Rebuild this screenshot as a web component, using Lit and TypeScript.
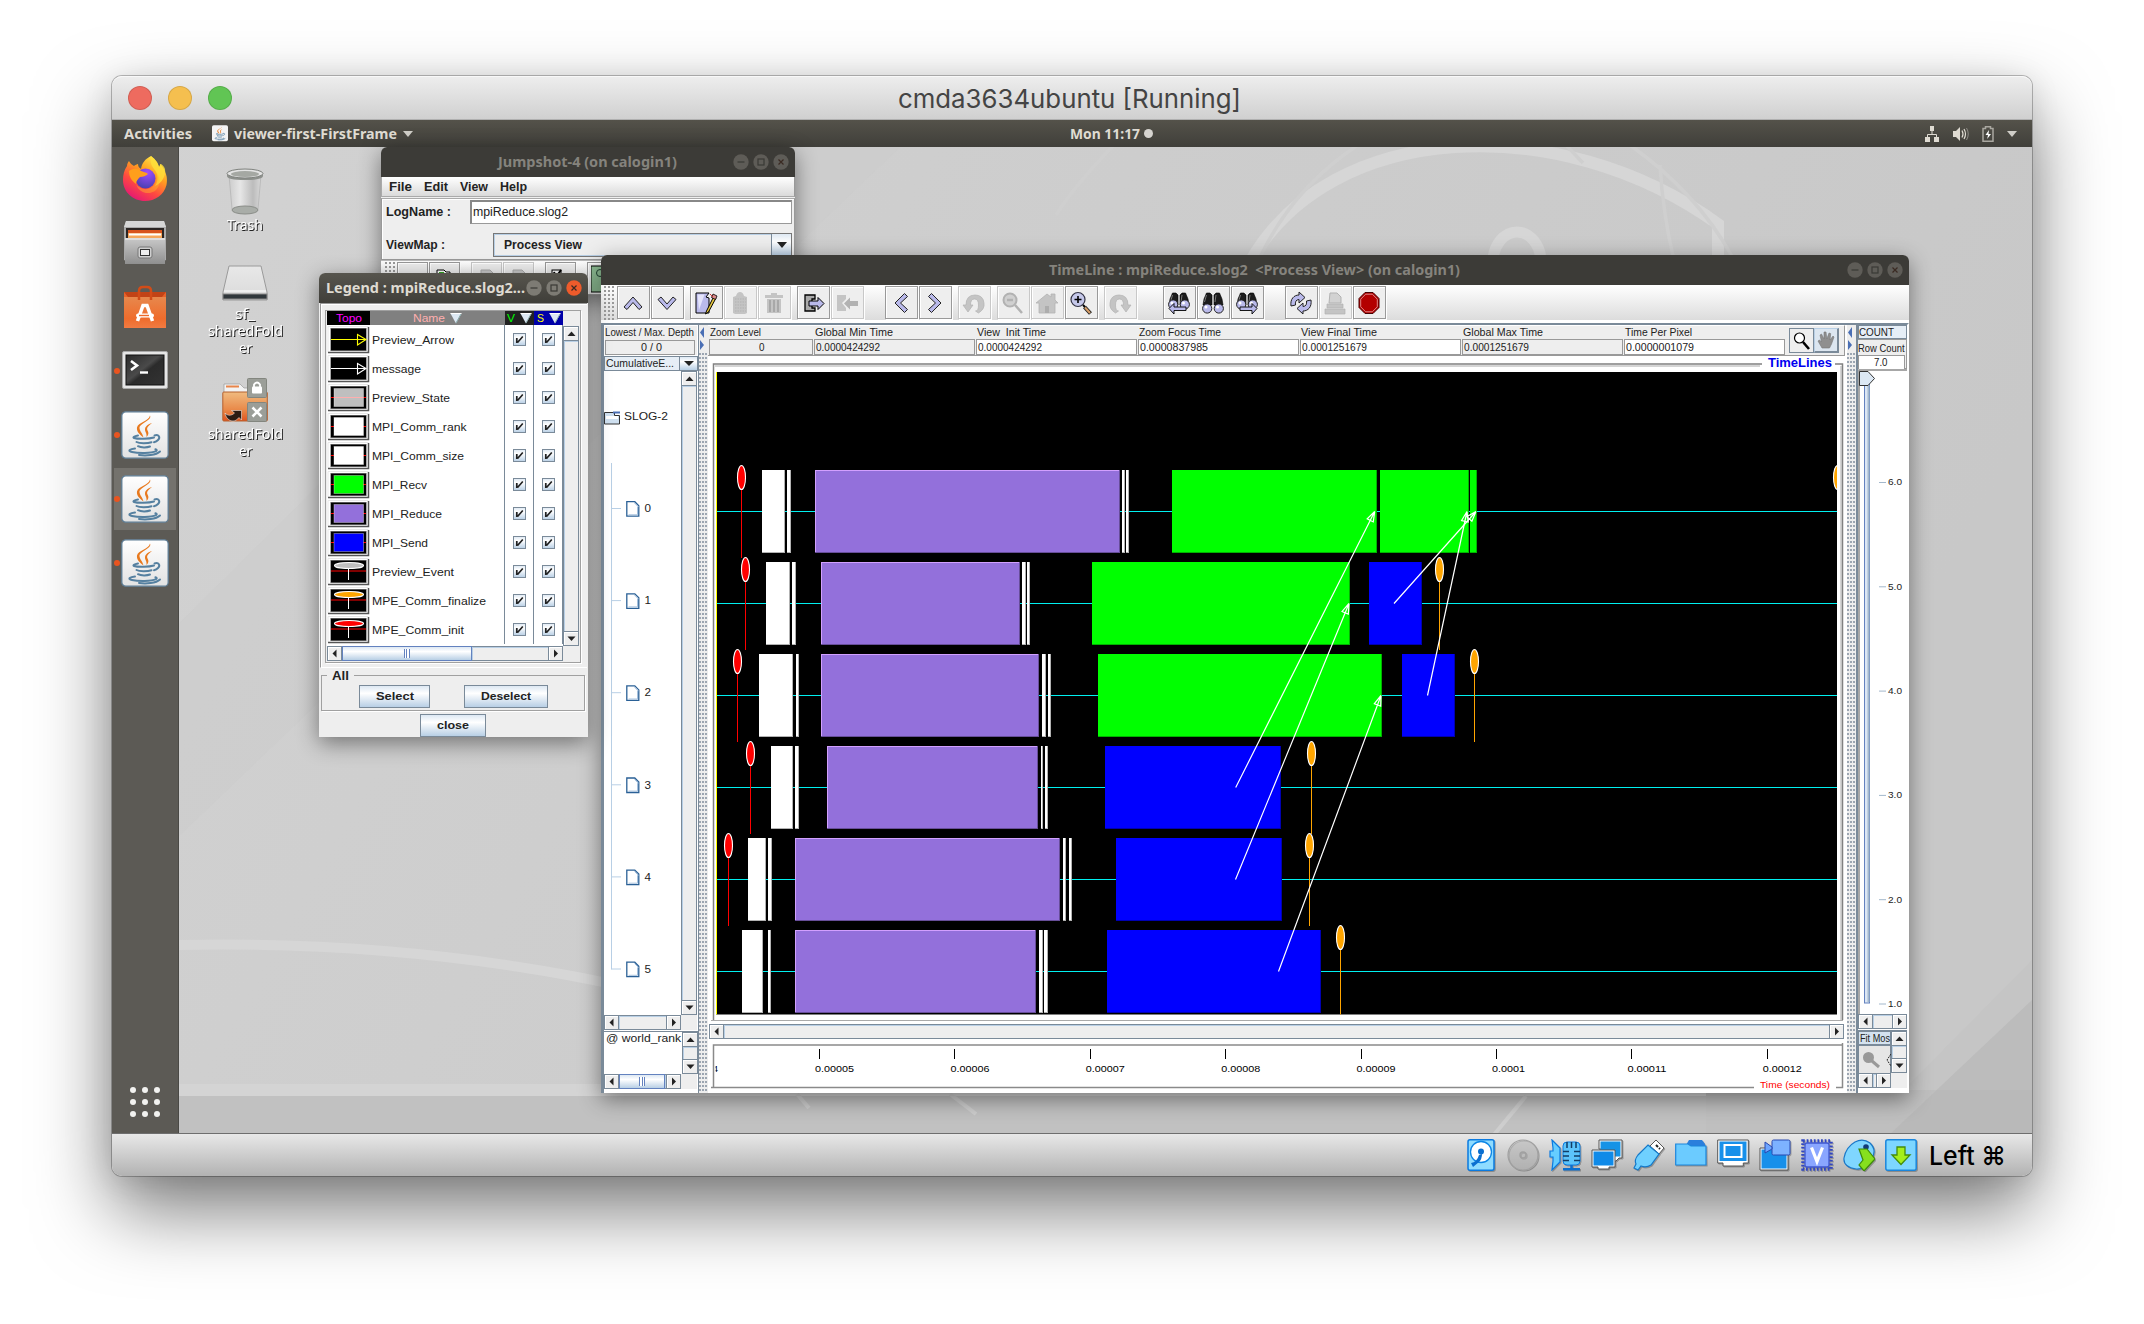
import { LitElement, html, svg, css, unsafeCSS } from "lit";
import { customElement } from "lit/decorators.js";

type Opt = { weight?: number; fill?: string; family?: string; shadow?: boolean };

const UBUNTU = "'Noto Sans','Open Sans','DejaVu Sans',sans-serif";
const HELV = "'Liberation Sans',Arial,sans-serif";
const MAC = "Inter,'Liberation Sans','DejaVu Sans',sans-serif";

/* A text run fitted to an exact advance width, centred on its cap height. */
const tx = (s: string, w: number, size: number, o: Opt = {}) => {
  const h = Math.ceil(size);
  return html`<svg class=${o.shadow ? "tx sh" : "tx"} width=${w} height=${h}>
    <text xml:space="preserve" x="0" y=${h / 2 + size * 0.36} textLength=${w} lengthAdjust="spacingAndGlyphs"
      font-family=${o.family ?? HELV} font-size=${size} font-weight=${o.weight ?? 400} fill=${o.fill ?? "#222"}>${s}</text></svg>`;
};

/* The same run, placed inside a drawing. */
const st = (s: string, x: number, cy: number, w: number, size: number, fill = "#222", weight = 400) =>
  svg`<text x=${x} y=${cy + size * 0.36} textLength=${w} lengthAdjust="spacingAndGlyphs" font-family=${HELV}
    font-size=${size} font-weight=${weight} fill=${fill}>${s}</text>`;

const tri: Record<string, string> = {
  u: "M2.5 9h8L6.5 4.5z",
  d: "M2.5 4.5h8L6.5 9z",
  l: "M8.5 2.5v8L4.5 6.5z",
  r: "M5 2.5v8L9 6.5z",
};
const sb = (d: string) => html`<div class="sb"><svg width="13" height="13" viewBox="0 0 13 13"><path d=${tri[d]} fill="#222" /></svg></div>`;

const winBtns = (active = false) => html`<div class="wb">
  <svg width="16" height="16" viewBox="0 0 16 16"><circle cx="8" cy="8" r="7.7" fill=${active ? "#7d7b74" : "#5e5c57"} /><path d="M4.5 8h7" stroke="#3a3935" stroke-width="1.2" /></svg>
  <svg width="16" height="16" viewBox="0 0 16 16"><circle cx="8" cy="8" r="7.7" fill=${active ? "#7d7b74" : "#5e5c57"} /><rect x="5" y="5" width="6" height="6" fill="none" stroke="#3a3935" stroke-width="1.2" /></svg>
  <svg width="16" height="16" viewBox="0 0 16 16"><circle cx="8" cy="8" r="7.7" fill=${active ? "#ee5b2b" : "#5e5c57"} /><path d="M5.5 5.5l5 5M10.500 5.500l-5 5" stroke="#3a2a22" stroke-width="1.2" /></svg>
</div>`;

const javaArt = svg`
  <path d="M29 4.500c2.500 5-10.500 7.500-10.500 12.500 0 3 3 5 4 9.500-4.500-3.500-7-6-6.500-10 .8-5 12-6.500 13-12z" fill="#e8791e"/>
  <path d="M31 12c-4 1-7 3.500-7 6.500 0 2.500 2 3.500 1.500 7.500 3-3 1.800-5 .8-7-.8-2.500 1.500-4.500 4.700-7z" fill="#e8791e"/>
  <g fill="none" stroke="#5580a0" stroke-width="2" stroke-linecap="round">
  <path d="M17 24.500c-4 .8-5.500 1.800-4 2.500 4 1.300 15 1 20-.5"/><path d="M33.500 24.500c4.500-1.500 6 2 3.500 4.500-1 1-2.500 1.800-4 2.200"/>
  <path d="M15.500 31c3 1.800 11.500 1.500 15 .2"/><path d="M17 35.200c3 1.600 9 1.500 12 .3"/>
  <path d="M14 37.500c-5 .5-8 2.500-3 3.500 7 1.600 19 1.400 24-.8 1.500-1 .5-1.700-.6-2"/><path d="M18 44c7 .9 17 .3 21-3.500"/></g>`;
const java = html`<svg width="48" height="48" viewBox="0 0 48 48"><defs><linearGradient id="jg" x2="0" y2="1"><stop offset="0" stop-color="#fff"/><stop offset="1" stop-color="#e2e2e2"/></linearGradient></defs>
  <rect x=".8" y=".8" width="46.400" height="46.400" rx="4" fill="url(#jg)" stroke="#5d7c94" stroke-width="1.300"/>${javaArt}</svg>`;

const firefox = html`<svg width="48" height="50" viewBox="0 0 48 50"><defs>
  <linearGradient id="fx" x1=".8" y1="0" x2=".2" y2="1"><stop offset="0" stop-color="#fff44f"/><stop offset=".35" stop-color="#ffa020"/><stop offset=".65" stop-color="#ff4a40"/><stop offset="1" stop-color="#e0107c"/></linearGradient>
  <radialGradient id="fp" cx=".6" cy=".2" r=".9"><stop offset="0" stop-color="#a04cff"/><stop offset="1" stop-color="#3f3fa8"/></radialGradient></defs>
  <path d="M30 2c5 4 7 7 8 11 1-1 1-2 1-3 6 6 8 14 6.500 21C43 41 34 47 24 47 12 47 2 38 2 26c0-5 1-10 4-14 0-2 1-4 2-5 1 2 3 4 5 5 1-1 3-2 4-2 0 2 1 4 3 5 1-6 4-10 10-13z" fill="url(#fx)"/>
  <circle cx="24.500" cy="24.500" r="10" fill="url(#fp)"/>
  <path d="M8 17c4-3 9-3 12 0 2 1 5 1 7 3-2 2-5 3-8 3-2 2-4 4-4 7-4-3-7-7-7-13z" fill="#ff9f1c"/>
  <path d="M30 2c-1 6 0 9 3 13 4 4 5 12 1 17 7-3 11-10 10-17-1-3-3-5-5-5 0 1 0 2-1 3-1-4-3-7-8-11z" fill="#ffe03a" opacity=".8"/>
  <path d="M15 30c3 5 11 7 16 3 5-4 6-10 3-16 6 6 6 14 1 19-7 6-17 3-20-6z" fill="#ffb52a" opacity=".45"/></svg>`;
const files = html`<svg width="44" height="46" viewBox="0 0 44 46"><defs><linearGradient id="fg" x2="0" y2="1"><stop offset="0" stop-color="#c9c9c9"/><stop offset="1" stop-color="#8f8f8f"/></linearGradient></defs>
  <path d="M3 1h38l2 6v33l-2 1V10H3v31l-2-1V7z" fill="#aaa"/><path d="M3 1h38l2 6H1z" fill="#d6d6d6"/><rect x="3" y="8" width="38" height="12" fill="#2b2523"/>
  <path d="M5 10h34v9H5z" fill="#d8531c"/><path d="M5 13h34v6H5z" fill="#f5a85c"/><path d="M6 13.500h32v2H6z" fill="#fff"/>
  <path d="M2 18h40v26H2z" fill="url(#fg)"/><path d="M2 18h40v2H2z" fill="#ddd"/><rect x="15" y="27" width="14" height="11" rx="2" fill="#cfcfcf" stroke="#777"/><rect x="17.500" y="29.500" width="9" height="6" fill="#eee" stroke="#333"/></svg>`;
const software = html`<svg width="44" height="44" viewBox="0 0 44 44"><defs><linearGradient id="sg" x2="0" y2="1"><stop offset="0" stop-color="#e7884d"/><stop offset=".7" stop-color="#ef6c2c"/><stop offset="1" stop-color="#f27b42"/></linearGradient></defs>
  <path d="M1 7h42v5H1z" fill="#c24316"/><path d="M1 12h42v31H1z" fill="url(#sg)"/><path d="M1 7l4 5H1zM43 7l-4 5h4z" fill="#e8622a"/>
  <path d="M16 15V6q0-4 4-4h4q4 0 4 4v9" fill="none" stroke="#d24c18" stroke-width="2.500"/>
  <path d="M14.500 36l5.500-15.500h4l5.500 15.500" fill="none" stroke="#fff" stroke-width="3.500"/><rect x="13" y="28.500" width="18" height="4" rx="2" fill="#fff"/><path d="M16 30.500h10" stroke="#ee6a2a" stroke-width="1.400"/></svg>`;
const terminal = html`<svg width="46" height="40" viewBox="0 0 46 40"><defs><linearGradient id="tg" x2="1" y2="1"><stop offset="0" stop-color="#2a2a2a"/><stop offset=".45" stop-color="#4a4a4a"/><stop offset=".55" stop-color="#2b2b2b"/><stop offset="1" stop-color="#333"/></linearGradient></defs>
  <rect x=".5" y=".5" width="45" height="37" rx="1.500" fill="#e6e6e6" stroke="#aaa"/><rect x="4" y="4" width="38" height="30" fill="url(#tg)" stroke="#111"/>
  <path d="M9 10l6 4.500L9 19" fill="none" stroke="#fff" stroke-width="2.600"/><path d="M18 21.500h8" stroke="#fff" stroke-width="2.400"/></svg>`;

const trash = html`<svg width="38" height="48" viewBox="0 0 38 48"><defs><linearGradient id="tr" x2="1" y2="0"><stop offset="0" stop-color="#ccc"/><stop offset=".35" stop-color="#e6e6e6"/><stop offset=".75" stop-color="#bcbcbc"/><stop offset="1" stop-color="#d8d8d8"/></linearGradient></defs>
  <path d="M3 7l3 34q13 6 26 0l3-34z" fill="url(#tr)" stroke="#b5b5b5" stroke-width=".8"/><ellipse cx="19" cy="42" rx="13" ry="4" fill="#a9ada8" stroke="#8a8d88"/>
  <path d="M1 5v3q0 4 18 4t18-4V5z" fill="#8d908c"/><ellipse cx="19" cy="5.500" rx="18" ry="4.500" fill="#e4e4e4" stroke="#7d807c"/><ellipse cx="19" cy="6" rx="14" ry="3" fill="#a5a8a3"/></svg>`;
const drive = html`<svg width="46" height="36" viewBox="0 0 46 36"><defs><linearGradient id="dg" x2="0" y2="1"><stop offset="0" stop-color="#e8e8e8"/><stop offset="1" stop-color="#dadada"/></linearGradient></defs>
  <path d="M7 1h32l6 26v8H1v-8z" fill="url(#dg)" stroke="#9a9a9a"/><path d="M2 26h42" stroke="#fff"/><rect x="1" y="29" width="44" height="5" fill="#30373b" stroke="#888"/></svg>`;
const shared = html`<svg width="46" height="44" viewBox="0 0 46 44"><defs><linearGradient id="og" x2="0" y2="1"><stop offset="0" stop-color="#f0bb80"/><stop offset=".6" stop-color="#e98a4a"/><stop offset="1" stop-color="#df5420"/></linearGradient></defs>
  <path d="M2 6h16l4 4h12v8H2z" fill="#f3f3f3" stroke="#999" stroke-width=".7"/><path d="M4 8.500h13" stroke="#e8854a" stroke-width="2"/>
  <rect x=".8" y="14" width="44.500" height="29" rx="1" fill="url(#og)" stroke="#b4602e"/>
  <path d="M3 35c1 5 4 8 8 8 2 0 4-1 6-3.500l2.500 2.500V32.500H9.500l3 2.500c-3 3-7 3-9.500 0z" fill="#2c1c14" stroke="#fff" stroke-width=".5"/>
  <rect x="25.500" y=".5" width="19" height="19" rx="1" fill="#9b9e98" stroke="#83867f"/><rect x="30" y="8.500" width="10" height="7" rx="1" fill="#fff"/><path d="M32 9V6.500q3-4 6 0V9" fill="none" stroke="#fff" stroke-width="1.800"/>
  <rect x="25.500" y="24.500" width="19" height="19" rx="1" fill="#9b9e98" stroke="#83867f"/><path d="M30.500 29.500l9 9M39.500 29.500l-9 9" stroke="#fff" stroke-width="2.600"/></svg>`;

/* Toolbar glyphs, drawn on a 24px grid. */
const P = "#b9b9ea";
const G = "#c4c4c4";
const GD = "#b2b2b2";
const bino = (dy: number, arrow: unknown) => svg`<path d="M5.500 2h3.500l2 2v10H2L3 8z M18.500 2H15l-2 2v10h9L21 8z" fill="#1c1c1c" stroke="#000" stroke-width=".6"/>
  <path d="M5.500 4L3.500 11M15 4l-1 7" stroke="#777" stroke-width="1"/><circle cx="6.200" cy=${15.5 + dy} r="4.600" fill=${P} stroke="#222"/><circle cx="17.800" cy=${15.5 + dy} r="4.600" fill=${P} stroke="#222"/>
  <circle cx="5" cy=${14 + dy} r="1.500" fill="#fff"/><circle cx="16.500" cy=${14 + dy} r="1.500" fill="#fff"/>${arrow}`;
const glyph: Record<string, unknown> = {
  up: svg`<path d="M12 6l9 10-3 2.500-6-7-6 7L3 16z" fill=${P} stroke="#222"/>`,
  down: svg`<path d="M12 18.500l9-10L18 6l-6 7-6-7-3 2.500z" fill=${P} stroke="#222"/>`,
  left: svg`<path d="M6 12L15.500 2.500l3 3L11.500 12l7 6.500-3 3z" fill=${P} stroke="#222"/>`,
  right: svg`<path d="M18 12L8.500 2.500l-3 3L12.500 12l-7 6.500 3 3z" fill=${P} stroke="#222"/>`,
  edit: svg`<path d="M2 2h13l-3 4 3 1v15H2z" fill=${P} stroke="#000"/><path d="M3.500 3.500h7L5 19z" fill="#e4e4fb"/><path d="M20 5l-7.500 15-1 3 3-2L22 7z" fill="#e3c53d" stroke="#000"/><path d="M19 3l4 2-1.500 3.500-4-2z" fill="#d98a8a" stroke="#000" stroke-width=".8"/><path d="M16 3l3 3" stroke="#c33"/>`,
  paste: svg`<path d="M5 6l3-1q1-4 4-4t4 4l3 1v16l-2 1H7l-2-1z" fill=${G}/><path d="M7 8h11M7 11h11M7 14h11M7 17h11M7 20h11" stroke=${GD} stroke-dasharray="1.500 1"/>`,
  trash: svg`<path d="M3 4h18v3H3zM9 2h6v2H9zM5 8h14v14H5z" fill=${G}/><path d="M8 9v12M12 9v12M16 9v12" stroke="#9f9f9f" stroke-width="1.500"/>`,
  exp: svg`<path d="M4 4h10v4h-3v9h3v3H4z" fill="#aaa" stroke="#000" stroke-width="1.300"/><path d="M8 10h9V6.500l6 6-6 6V15H8z" fill=${P} stroke="#000"/>`,
  imp: svg`<path d="M2 4h9v4L7 12l4 5v3H2z" fill=${G}/><path d="M23 10h-8V6.500l-6 6 6 6V15h8z" fill=${GD}/>`,
  undo: svg`<path d="M1 14l5 7 5-7H8.500q0-6 4-6t4 6-3 6l3 2Q23 18 22 12 21 4 13 4 4 4 4 14z" fill=${G} stroke=${GD} stroke-width=".7"/>`,
  redo: svg`<path d="M23 14l-5 7-5-7h2.500q0-6-4-6t-4 6 3 6l-3 2Q1 18 2 12 3 4 11 4q9 0 9 10z" fill=${G} stroke=${GD} stroke-width=".7"/>`,
  zout: svg`<circle cx="9" cy="9" r="6.500" fill="#d0d0d0" stroke=${GD} stroke-width="2"/><path d="M6 9h6M14 14l7 8" stroke=${GD} stroke-width="2.500"/>`,
  home: svg`<path d="M1 12L12 3l4 3V3h4v6l3 3h-3v10H4V12z" fill=${G} stroke=${GD} stroke-width=".8"/><path d="M10 15h4v7h-4z" fill="#adadad"/>`,
  zin: svg`<circle cx="9" cy="8.500" r="7" fill="#c5c8ea" stroke="#334" stroke-width="1.200"/><path d="M5.500 8.500h7M9 5v7" stroke="#000" stroke-width="1.600"/><path d="M14 14l2 2" stroke="#000" stroke-width="2"/><path d="M15.500 16l6 6.500" stroke="#222" stroke-width="4"/><path d="M16 16.500l5 5.500" stroke="#d9a06a" stroke-width="2"/>`,
  bl: bino(-2, svg`<path d="M2 17.500l5-5v3.500h12v3.500H7V23z" fill=${P} stroke="#000" stroke-width=".9"/>`),
  b: bino(2, ""),
  br: bino(-2, svg`<path d="M22 17.500l-5-5v3.500H5v3.500h12V23z" fill=${P} stroke="#000" stroke-width=".9"/>`),
  refresh: svg`<path d="M2 15C1 8 5 4 10 4V1l6 5.500-6 5.500V8.500C7 8.500 6 11 6.500 14z" fill=${P} stroke="#222"/><path d="M22 9c1 7-3 11-8 11v3l-6-5.500 6-5.500v3.500c3 0 4-2.500 3.500-5.500z" fill=${P} stroke="#222"/>`,
  print: svg`<path d="M6 12L7 2h7l4 4v6z" fill="#d2d2d2" stroke=${GD}/><path d="M4 13h16v4H4zM2 18h20v5H2z" fill=${G} stroke=${GD} stroke-width=".7"/>`,
  stop: svg`<path d="M8 1.500h8l6 6v9l-6 6H8l-6-6v-9z" fill="#b30000" stroke="#400" /><path d="M8.700 3.200h6.600l5 5v7.600l-5 5H8.700l-5-5V8.200z" fill="none" stroke="#d88" stroke-width="1"/>`,
};
const tools: Array<[string, number, boolean?]> = [
  ["up", 0], ["down", 1], ["edit", 6], ["paste", 1, true], ["trash", 1, true], ["exp", 6], ["imp", 1, true],
  ["left", 21], ["right", 1], ["undo", 6, true], ["zout", 6, true], ["home", 1, true], ["zin", 1], ["redo", 6, true],
  ["bl", 26], ["b", 1], ["br", 1], ["refresh", 21], ["print", 1, true], ["stop", 1],
];

/* ---------- timeline data ---------- */
const rows: Array<Array<[string, number, number]>> = [
  [["w", 762, 785], ["w", 787, 791], ["p", 815, 1120], ["w", 1122, 1125], ["w", 1126, 1129], ["g", 1172, 1377], ["g", 1380, 1469], ["g", 1470, 1477]],
  [["w", 766, 790], ["w", 792, 796], ["p", 821, 1020], ["w", 1022, 1026], ["w", 1027, 1030], ["g", 1092, 1350], ["b", 1369, 1422]],
  [["w", 759, 793], ["w", 796, 799], ["p", 821, 1039], ["w", 1042, 1046], ["w", 1048, 1051], ["g", 1098, 1382], ["b", 1402, 1455]],
  [["w", 771, 793], ["w", 795, 799], ["p", 827, 1038], ["w", 1041, 1043], ["w", 1045, 1048], ["b", 1105, 1281]],
  [["w", 748, 766], ["w", 768, 772], ["p", 795, 1060], ["w", 1063, 1066], ["w", 1069, 1072], ["b", 1116, 1282]],
  [["w", 742, 763], ["w", 768, 771], ["p", 795, 1036], ["w", 1039, 1043], ["w", 1044, 1048], ["b", 1107, 1321]],
];
const shade: Record<string, [string, string, string]> = {
  w: ["#fff", "#fff", "#b2b2b2"],
  p: ["#9370db", "#d2a0ff", "#674e99"],
  g: ["#00ff00", "#00ff00", "#00b200"],
  b: ["#0000ff", "#0000ff", "#0000b2"],
};
const pins: Array<[number, number, string]> = [
  [741.5, 0, "red"], [745.5, 1, "red"], [737.5, 2, "red"], [750.5, 3, "red"], [728.5, 4, "red"],
  [1837.5, 0, "orange"], [1439.5, 1, "orange"], [1474.5, 2, "orange"], [1311.5, 3, "orange"], [1309.5, 4, "orange"], [1340.5, 5, "orange"],
];
const arrows: Array<[number, number, number, number]> = [
  [1235.7, 787.5, 1374.7, 511.5], [1235.5, 879.5, 1349, 603.5], [1278.5, 971.5, 1381, 695.5], [1394, 603.5, 1476, 511.5], [1427.5, 695.5, 1467, 511.5],
];
const state = (k: string, x0: number, x1: number, y: number, h = 83) => {
  const [f, hi, lo] = shade[k];
  return svg`<rect x=${x0} y=${y} width=${x1 - x0} height=${h} fill=${lo}/><rect x=${x0} y=${y} width=${x1 - x0 - 1} height=${h - 1} fill=${hi}/>
    <rect x=${x0 + 1} y=${y + 1} width=${Math.max(0, x1 - x0 - 2)} height=${h - 2} fill=${f}/>`;
};
const arrow = ([x0, y0, x1, y1]: [number, number, number, number]) => {
  const a = Math.atan2(y1 - y0, x1 - x0);
  const p = (d: number, s: number) => `${x1 - d * Math.cos(a) + s * Math.sin(a)} ${y1 - d * Math.sin(a) - s * Math.cos(a)}`;
  return svg`<path d=${`M${x0} ${y0}L${x1} ${y1}L${p(10, 3.4)}L${p(10, -3.4)}L${x1} ${y1}`} fill="none" stroke="#fff" stroke-width="1.2"/>`;
};

const timeCanvas = html`<svg class="blk" width="1139" height="667" viewBox="708 356 1139 667">
  <rect x="708" y="356" width="1139" height="667" fill="#fff"/>
  <path d="M713.500 1020V364H1762M1835 364h7.500v656" fill="none" stroke="#808080" stroke-width="1.500"/><path d="M711 1020.500h1132M715 366h1045M1841 366v654" fill="none" stroke="#aaa"/>
  ${st("TimeLines", 1768, 363, 64, 12, "#0000f0", 700)}
  <svg x="716" y="372" width="1121" height="642.500" viewBox="716 372 1121 642.500">
    <rect x="716" y="372" width="1121" height="643" fill="#000"/><rect x="716" y="372" width="1" height="643" fill="#ff0"/>
    ${rows.map((r, i) => svg`<rect x="717" y=${511 + 92 * i} width="1120" height="1" fill="#00f0f0"/>${r.map(([k, a, b]) => state(k, a, b, 470 + 92 * i))}`)}
    ${pins.map(([x, i, c]) => svg`<path d="M${x} ${488 + 92 * i}v70" stroke=${c}/><ellipse cx=${x} cy=${477.5 + 92 * i} rx="4" ry="12" fill=${c} stroke="#fff" stroke-width="1.100"/>`)}
    ${arrows.map(arrow)}
  </svg></svg>`;

const ruler = html`<svg class="blk" width="1139" height="52" viewBox="708 1040 1139 52">
  <rect x="708" y="1040" width="1139" height="52" fill="#fff"/>
  <path d="M713.500 1087V1045H1842M711 1087.500H1754M1836 1087.500h6.500V1043" fill="none" stroke="#8a8a8a" stroke-width="1.500"/>
  ${["0.00005", "0.00006", "0.00007", "0.00008", "0.00009", "0.0001", "0.00011", "0.00012"].map(
    (s, i) => svg`<rect x=${Math.round(819 + 135.4 * i)} y="1049" width="1" height="10" fill="#000"/>${st(s, 815 + 135.4 * i, 1069, s.length === 6 ? 33 : 39, 9.5, "#000")}`)}
  <svg x="715.500" y="1060" width="6" height="16" viewBox="715.500 1060 6 16">${st("0.00004", 680, 1069, 38, 9.5, "#000")}</svg>
  ${st("Time (seconds)", 1760, 1085, 70, 9.5, "#f00")}</svg>`;

const tree = html`<svg class="blk" width="77" height="643" viewBox="604 371 77 643"><rect x="604" y="371" width="77" height="643" fill="#fff"/>
  <path d="M604.500 412.500h10v3h5v8.500h-15z" fill="#cfe0f0" stroke="#333"/><path d="M613 411.500h7v2h-7z" fill="#4a6fb5"/><path d="M606 416h12v3h-12z" fill="#fff"/>
  ${st("SLOG-2", 624, 416.5, 44, 11)}
  <path d="M611.500 463V969.500" stroke="#b8cfe5"/>
  ${rows.map((_, i) => svg`<path d="M611.500 ${508.5 + 92.1 * i}h9.500" stroke="#b8cfe5"/>
    <path d="M626.800 ${501.7 + 92.1 * i}h8l4 4v10.500h-12z" fill="#fff" stroke="#2a6096" stroke-width="1.300"/><path d="M628.500 ${514.8 + 92.1 * i}h9v-8M634.500 ${503 + 92.1 * i}l4 4" fill="none" stroke="#a5c0dd"/>
    ${st(String(i), 644.5, 508.5 + 92.1 * i, 6.5, 10.5)}`)}</svg>`;

const slider = html`<svg class="blk" width="49" height="645" viewBox="1857 370 49 645"><rect x="1857" y="370" width="49" height="645" fill="#fff"/>
  <path d="M1858 1015V371h48" fill="none" stroke="#8a8a8a" stroke-width="1.500"/>
  <rect x="1863.500" y="385" width="5" height="619" fill="#dbe6f4" stroke="#6382bf"/><rect x="1866.500" y="386" width="2" height="617" fill="#a3b8cc"/>
  <path d="M1858.500 372.500h8.500l6.500 7-6.500 7h-8.500z" fill="#dce8f4" stroke="#333"/>
  ${["6.0", "5.0", "4.0", "3.0", "2.0", "1.0"].map((s, i) => svg`<path d="M1878 ${483.5 + 104.3 * i}h7" stroke="#a3b8cc"/>${st(s, 1887, 483 + 104.3 * i, 14, 9.5)}`)}</svg>`;

/* ---------- legend data ---------- */
const kinds: Array<[string, number, string, string]> = [
  ["Preview_Arrow", 82, "arrow", "#ff0"], ["message", 49, "arrow", "#fff"], ["Preview_State", 78, "state", "#bfbfbf"],
  ["MPI_Comm_rank", 94.5, "state", "#fff"], ["MPI_Comm_size", 92, "state", "#fff"], ["MPI_Recv", 55, "state", "#0f0"],
  ["MPI_Reduce", 70, "state", "#9370db"], ["MPI_Send", 56, "state", "#00f"], ["Preview_Event", 82, "event", "#bfbfbf"],
  ["MPE_Comm_finalize", 114, "event", "orange"], ["MPE_Comm_init", 92, "event", "red"],
];
const topo = (k: string, c: string) => html`<svg width="43" height="29" viewBox="0 0 43 29">
  <path d="M1 27.500V1.500h40.500" fill="none" stroke="#e8e8e8"/><path d="M1 27.500h40.500V2" fill="none" stroke="#555" stroke-width="1.500"/><path d="M3 26V3h37v23z" fill="#a8a8a8"/>
  <rect x="4" y="3.500" width="35" height="22" fill="#000"/>
  ${k === "arrow" ? svg`<path d="M4 14.500h26M30.500 9.500v10.500l8.500-5.500z M30.500 14.500h8" fill="none" stroke=${c} stroke-width="1.100"/>` : ""}
  ${k === "state" ? svg`<path d="M4 14.500h35" stroke="red"/><rect x="7" y="5.500" width="29.500" height="18" fill=${c} stroke="#fff" stroke-opacity=".35"/>${c === "#bfbfbf" ? svg`<path d="M7 14.500h29" stroke="#ffafaf"/>` : ""}` : ""}
  ${k === "event" ? svg`<path d="M4 14h35" stroke="red"/><path d="M21.500 11v12" stroke="#fff"/><ellipse cx="22" cy="8.500" rx="14.500" ry="3" fill=${c} stroke="#fff" stroke-width="1.100"/>` : ""}</svg>`;
const check = html`<svg width="13" height="13" viewBox="0 0 13 13"><defs><linearGradient id="cb" x2="0" y2="1"><stop offset="0" stop-color="#dde8f3"/><stop offset=".35" stop-color="#fff"/><stop offset="1" stop-color="#b8cfe5"/></linearGradient></defs>
  <rect x=".5" y=".5" width="12" height="12" fill="url(#cb)" stroke="#7a8a99"/><path d="M3.800 5v5M4.500 9.500L9.800 3.500" stroke="#222" stroke-width="1.700" fill="none"/></svg>`;
const sortTri = html`<svg width="12" height="11" viewBox="0 0 12 11"><path d="M.5.500h11L6 10.500z" fill="#dde8f3"/><path d="M.5.500h11" stroke="#fff"/><path d="M11 1L6 10" stroke="#8aa"/></svg>`;

const status = [
  svg`<rect x="3" y=".8" width="26" height="30.400" rx="2" fill="#8fdcff" stroke="#0a7ae0" stroke-width="1.500"/><circle cx="16" cy="13" r="10.500" fill="#fff" stroke="#0d86e6" stroke-width="1.300"/><circle cx="16" cy="12.500" r="3" fill="#0a6fd0"/><path d="M17 15q0 5-3 8l-6 5-2-4q6-1 8-8z" fill="#0a6fd0"/>`,
  svg`<circle cx="16" cy="16" r="15" fill="#bdbdbd" fill-opacity=".35" stroke="#a0a0a0" stroke-width="1.200"/><circle cx="16" cy="16" r="3" fill="none" stroke="#a0a0a0" stroke-width="1.500"/>`,
  svg`<path d="M1 12h3V9l-1-8 8 8v14l-8 8 1-9v-4H1z" fill="#66cdff" stroke="#0a7ae0" stroke-width="1.200"/><rect x="14" y="3" width="17" height="23" rx="4" fill="#5cc4fb" stroke="#0a7ae0"/><path d="M18 3v6M22.500 3v6M27 3v6M14 12.500h6M14 17h6M14 21.500h6M25 12.500h6M25 17h6M25 21.500h6" stroke="#123d66" stroke-width="1.500"/><path d="M22.500 26v4M14 30.300h17" stroke="#0a6fd0" stroke-width="2.500"/>`,
  svg`<path d="M8 1h23v18h-3l-3 3h-6V10H8z" fill="#fff" stroke="#555"/><rect x="9.500" y="2.500" width="20" height="15" fill="#1593e6"/><path d="M1 11h23v17h-6v2H7v-2H1z" fill="#fff" stroke="#555"/><rect x="2.500" y="12.500" width="20" height="14" fill="#0f8ae8"/>`,
  svg`<path d="M23 1l8 8-5 6-9-8z" fill="#fff" stroke="#555"/><path d="M23 6l2 2M26 9l1 1" stroke="#222" stroke-width="2"/><path d="M15 6l11 9-8 11q-5 3-10 1l-3 4-4-2 2-4q-2-4 2-9z" fill="#6fd0ff" stroke="#1478c8" stroke-width="1.200"/>`,
  svg`<path d="M11 6l3-5h13l3 4v3H11z" fill="#2a7fdc"/><path d="M.7 5H13l3 2h15v19H.7z" fill="#6bcbff" stroke="#1b86dc" stroke-width="1.200"/>`,
  svg`<path d="M.700 1h30.600v23h-5v3H6v-3H.700z" fill="#fff" stroke="#555"/><rect x="2.500" y="2.500" width="27" height="19.500" fill="#1790ea"/><rect x="7.500" y="6" width="17" height="12" fill="none" stroke="#fff" stroke-width="2"/>`,
  svg`<path d="M1 9h28v22H1z" fill="#fff" stroke="#555"/><rect x="2.500" y="10.500" width="25" height="19" fill="#1790ea"/><rect x="13" y="1" width="18" height="15" rx="1.500" fill="#7db2ff" stroke="#2948b0"/><path d="M13 8L6 3v11l7-4z" fill="#6ea6ff" stroke="#2948b0"/>`,
  svg`<rect x="2" y="2" width="28" height="28" fill="none" stroke="#3247c0" stroke-width="3.500" stroke-dasharray="1.800 1.800"/><rect x="4" y="4" width="24" height="24" rx="2" fill="#8aa6ff" stroke="#3f57d0" stroke-width="1.300"/><path d="M10.500 8.500L16 22.500l5.500-14" fill="none" stroke="#fff" stroke-width="3.200"/>`,
  svg`<path d="M12 3q8-4 15 1 7 7 2 15-6 12-16 11Q0 28 1 19 3 8 12 3z" fill="#7fd6ff" stroke="#1a78c8" stroke-width="1.200"/><circle cx="23" cy="8" r="2.800" fill="#123b78"/><path d="M16 10h8l8 10-11 12-5-6 4-5z" fill="#86e01e" stroke="#3e8a0a" stroke-width="1.200"/>`,
  svg`<rect x=".8" y=".8" width="30.400" height="30.400" rx="2" fill="#7dd6ff" stroke="#1b86dc" stroke-width="1.500"/><path d="M12 8h8v8h5l-9 9.500L7 16h5z" fill="#a4ee1c" stroke="#448c0c" stroke-width="1.300"/>`,
];

const OCEAN = unsafeCSS("linear-gradient(#dde8f3,#fff 35%,#b8cfe5)");

@customElement("app-root")
export class AppRoot extends LitElement {
  static styles = css`
    :host { display: block; width: 2144px; height: 1324px; background: #fff; overflow: hidden; box-sizing: border-box; padding: 76px 112px 0; }
    * { box-sizing: border-box; }
    svg { display: block; flex: none; }
    .tx { overflow: visible; }
    .sh { filter: drop-shadow(1px 1px 0 #222); }
    .mac { width: 1920px; height: 1100px; border-radius: 10px; box-shadow: 0 0 0 1px rgba(0,0,0,.25), 0 34px 76px rgba(0,0,0,.52), 0 4px 30px rgba(0,0,0,.1); }
    .mtitle { height: 44px; border-radius: 10px 10px 0 0; background: linear-gradient(#ededed,#d0d0d0); border-top: 1px solid #f8f8f8; border-bottom: 1px solid #b0b0b0; display: flex; align-items: center; padding-left: 16px; gap: 16px; }
    .light { width: 24px; height: 24px; border-radius: 50%; border: 1px solid rgba(0,0,0,.12); }
    .r { background: #ee6b5f; } .y { background: #f5bf4f; } .g { background: #61c554; }
    .mtitle .tx { margin-left: 650px; margin-top: 1px; }
    .screen { height: 1014px; position: relative; overflow: hidden; background: #cacaca; border-bottom: 1px solid #6e6e6e; }
    .wall { position: absolute; left: 0; top: 0; }
    .panel { position: relative; height: 27px; background: linear-gradient(#54524a,#403f3a); display: flex; align-items: center; padding: 0 15px 0 12px; }
    .panel .app { margin: 0 6px 0 20px; } .panel .c1 { margin-left: 6px; } .panel .clock { margin-left: 657px; } .panel .dot { width: 9px; height: 9px; border-radius: 50%; background: #d6d4d0; margin-left: 4px; }
    .tray { margin-left: auto; display: flex; align-items: center; gap: 12px; }
    .below { position: relative; display: grid; grid-template-columns: 67px 1fr; height: 987px; }
    .dock { background: #5c5a55; border-right: 1px solid #4a4945; display: flex; flex-direction: column; align-items: center; }
    .di { height: 64px; width: 67px; display: flex; align-items: center; flex: none; }
    .di i { width: 6px; height: 6px; border-radius: 50%; background: #e95420; margin: 0 3px 0 2px; visibility: hidden; }
    .di.on i { visibility: visible; }
    .di span { width: 44px; display: flex; justify-content: center; }
    .di.act { background: linear-gradient(#74726d,#74726d) 2px 1px/62px 62px no-repeat; }
    .grid9 { margin-top: auto; display: grid; grid-template-columns: repeat(3,6px); gap: 6px; padding-bottom: 17px; width: 30px; }
    .grid9 b { width: 6px; height: 6px; border-radius: 50%; background: #f2f2f0; }
    .icons { display: flex; flex-direction: column; align-items: center; width: 132px; padding-top: 21px; }
    .icons .tx { margin-top: 2px; } .icons .g00 { height: 1px; margin-bottom: -2px; }
    .gap0 { height: 3px; } .gap1 { height: 33px; } .gap2 { height: 23px; } .gap3 { height: 2px; }
    .win { position: absolute; border-radius: 6px 6px 0 0; box-shadow: 0 6px 22px rgba(0,0,0,.45); background: #eee; display: flex; flex-direction: column; }
    .wt { height: 30px; flex: none; background: #3c3b37; border-radius: 6px 6px 0 0; display: flex; align-items: center; justify-content: space-between; padding-right: 6px; }
    .wt .tx { margin-bottom: 2px; }
    .wb { display: flex; gap: 4px; }
    .jump { left: 269px; top: 27px; width: 414px; height: 148px; }
    .jump .wt { padding-left: 117px; }
    .menu { height: 20px; display: flex; align-items: center; padding-left: 7px; background: linear-gradient(#fff,#dadada); border-bottom: 1px solid #aaa; gap: 12px; border-left: 1px solid #aaa; border-right: 1px solid #999; }
    .jbody { height: 62px; border: 1px solid #999; border-top-color: #aaa; margin-top: 1px; padding: 1px 2px 2px 4px; display: flex; flex-direction: column; justify-content: space-between; box-shadow: inset 1px 1px #fff; }
    .jr { display: flex; align-items: center; height: 24px; justify-content: space-between; }
    .inp { background: #fff; border: 1px solid #999; border-top: 2px solid #888; border-left: 2px solid #888; width: 322px; height: 24px; display: flex; align-items: center; padding-left: 1px; }
    .inp .tx, .cmb .tx { margin-bottom: 1px; }
    .cmb { border: 1px solid #777; box-shadow: inset 0 0 0 1px #b8cfe5; background: #eee; width: 299px; height: 24px; display: flex; align-items: center; justify-content: space-between; padding-left: 10px; }
    .cmb div { width: 20px; height: 22px; border-left: 1px solid #7a8a99; background: ${OCEAN}; display: flex; align-items: center; justify-content: center; }
    .jtools { flex: 1; display: flex; background: linear-gradient(#fff,#ddd); border-top: 1px solid #bbb; padding: 1px 0 0 4px; overflow: hidden; }
    .grip { width: 10px; background: radial-gradient(circle at 1px 1px,#9a9a9a .8px,transparent 1px) 0 0/4px 4px; }
    .tb { width: 33px; height: 33px; border: 1px solid #999; box-shadow: 1px 1px #fff, inset 1px 1px #fff; background: #eee; display: flex; align-items: center; justify-content: center; flex: none; }
    .tb.dis { border-color: #c8c8c8; }
    .jtools .tb { width: 31px; }
    .legend { left: 207px; top: 153px; width: 269px; height: 464px; }
    .legend .wt { background: linear-gradient(#57554e,#3f3e39); padding-left: 7px; }
    .lp { margin: 0 1px; border-left: 1px solid #999; border-top: 1px solid #999; box-shadow: inset 1px 1px #fff; padding: 6px 0 0 4px; height: 365px; border-bottom: 1px solid #fff; flex: none; }
    .lsc { width: 256px; height: 353px; border: 1px solid #a0a0a0; box-shadow: 1px 1px #fff; padding-left: 1px; }
    .lh { display: flex; height: 15px; } .lh div { display: flex; align-items: center; justify-content: center; gap: 5px; } .lh .tx { margin-bottom: 1px; }
    .h1 { width: 43px; background: #000; } .h2 { width: 135px; background: #808080; } .h3 { width: 29px; background: #222; } .h4 { width: 29px; background: #0000a8; }
    .lm { display: flex; height: 320px; }
    .lrs { width: 236px; background: #fff; margin-top: -1px; }
    .lr { display: flex; height: 29px; } .lr .nm { width: 135px; padding-left: 2px; display: flex; align-items: center; border-right: 1px solid #7a8a99; }
    .lr .ck { width: 29px; border-right: 1px solid #7a8a99; display: flex; align-items: center; justify-content: center; }
    .vs { width: 16px; display: flex; flex-direction: column; background: #eee; border: 1px solid #7a8a99; border-width: 0 1px; flex: none; }
    .hs { height: 15px; display: flex; background: #eee; border: 1px solid #7a8a99; border-width: 1px 0; }
    .sb { width: 15px; height: 15px; border: 1px solid #7a8a99; background: #eee; box-shadow: inset 1px 1px #fff; display: flex; align-items: center; justify-content: center; flex: none; margin: -1px 0; }
    .vs .sb { width: 16px; margin: 0 -1px; }
    .trk { flex: 1; box-shadow: inset 1px 1px #b8cfe5; }
    .thumb { border: 1px solid #6382bf; background: ${OCEAN}; display: flex; align-items: center; justify-content: center; margin: -1px 0; }
    .thumb i { width: 6px; height: 9px; background: repeating-linear-gradient(90deg,#6382bf 0 1px,#fff 1px 2.500px); }
    .grp { margin: 7px 3px 0 2px; height: 36px; border: 1px solid #a0a0a0; box-shadow: 1px 1px #fff; display: flex; padding: 9px 0 0 37px; gap: 34px; position: relative; flex: none; }
    .grp .lab { position: absolute; left: 5px; top: -6px; background: #eee; padding: 0 5px; }
    .btn { height: 23px; border: 1px solid #7a8a99; background: ${OCEAN}; display: flex; align-items: center; justify-content: center; flex: none; }
    .btn .tx { margin-bottom: 2px; }
    .cl { display: flex; justify-content: center; padding: 3px 2px 0 0; }
    .time { left: 489px; top: 135px; width: 1308px; height: 838px; }
    .time .wt { padding-left: 448px; }
    .bar { height: 38px; flex: none; display: flex; align-items: flex-start; padding: 1px 0 0 3px; background: linear-gradient(#fff,#dcdcdc 92%,#fff 93%); }
    .bar .grip { width: 10px; height: 34px; margin-right: 3px; }
    .bar .tb svg { position: relative; left: -1px; }
    .cols { flex: 1; display: grid; grid-template-columns: 98px 9px 1139px 9px 53px; background: #fff; }
    .cols > div { border-top: 2px solid #7a8a99; }
    .lc { border-left: 3px solid #7a8a99; display: flex; flex-direction: column; border-right: 1px solid #7a8a99; }
    .dep { height: 31px; background: #eee; border: 1px solid #fff; display: flex; flex-direction: column; align-items: flex-start; }
    .fld { height: 16px; border: 1px solid #999; display: flex; align-items: center; padding-left: 2px; }
    .dep .fld { width: 90px; justify-content: center; height: 15px; margin-top: 1px; } .dep .lbl { padding-left: 0; }
    .ccb { height: 15px; display: flex; align-items: center; justify-content: space-between; border: 1px solid #7a8a99; background: #e6eef6; padding-left: 1px; flex: none; }
    .ccb .tx { margin-bottom: 1px; }
    .ccb div { width: 18px; height: 13px; background: ${OCEAN}; border-left: 1px solid #7a8a99; display: flex; align-items: center; justify-content: center; }
    .row { display: flex; } .t1 { height: 644px; }
    .hs.n { flex: none; } .cor { width: 16px; background: #eee; }
    .wr { height: 43px; display: flex; overflow: hidden; border-top: 1px solid #7a8a99; margin-top: 1px; }
    .wr .bd { flex: 1; padding: 0 0 0 2px; background: #fff; }
    .sp { background: #eee; display: flex; flex-direction: column; }
    .sp i { flex: 1; background: radial-gradient(circle at 1px 1px,#9aa4b0 .7px,transparent 1px) 3px 0/3px 4px; }
    .cc { display: flex; flex-direction: column; }
    .hd { height: 31px; display: flex; gap: 1px; background: #eee; border-bottom: 1px solid #999; border-top: 1px solid #fff; padding-left: 1px; width: 1137px; border-right: 1px solid #999; }
    .hd .f { width: 161px; display: flex; flex-direction: column; } .hd .f:first-child { width: 104px; }
    .lbl { height: 13px; display: flex; align-items: center; padding-left: 1px; flex: none; }
    .hd .fld { background: #fff; padding-left: 1px; } .hd .fld.ro { background: #eee; } .hd .f:first-child .fld { justify-content: center; }
    .zb { display: flex; margin: 2px 0 0 3px; } .zb div { width: 25px; height: 25px; display: flex; align-items: center; justify-content: center; border: 1px solid #7a8a99; }
    .zb div + div { background: #dce6f0; border-color: #b8cfe5 #7a8a99 #7a8a99 #b8cfe5; border-width: 1px 2px 2px 1px; }
    .ch { margin: 1px 3px 1px 1px; height: 15px; flex: none; }
    .rc { border-left: 2px solid #7a8a99; display: flex; flex-direction: column; border-right: 2px solid #fff; }
    .cnt { height: 14px; border: 1px solid #7a8a99; background: #e6eef6; display: flex; align-items: center; flex: none; }
    .rcf { height: 30px; padding-top: 2px; background: #eee; border: 1px solid #999; border-width: 1px 1px 1px 0; flex: none; } .rcf .lbl { padding-left: 0; }
    .rcf .fld { background: #fff; width: 47px; justify-content: center; height: 15px; padding-right: 4px; margin-top: 0; }
    .fit { height: 43px; display: flex; overflow: hidden; border-top: 1px solid #7a8a99; margin-top: 1px; flex: none; }
    .fl { width: 34px; overflow: hidden; } .fl .a { height: 14px; background: #d4e2ef; border: 1px solid #7a8a99; display: flex; align-items: center; padding-left: 1px; } .fl .b { height: 29px; background: #e6e6e6; border: 1px solid #7a8a99; display: flex; align-items: center; padding-left: 3px; gap: 5px; }
    .stat { height: 42px; border-radius: 0 0 10px 10px; background: linear-gradient(#e8e8e8,#b2b2b2); display: flex; align-items: center; justify-content: flex-end; gap: 10px; padding-right: 26px; }
    .stat .s { filter: drop-shadow(1px 1px 0 rgba(0,0,0,.25)); position: relative; left: -1px; } .stat .tx { margin: 2px 0 0 1px; }
  `;

  private wallpaper() {
    return html`<svg class="wall" width="1920" height="1014" viewBox="112 120 1920 1014">
      <defs><linearGradient id="wl" x2="1" y2=".3"><stop offset="0" stop-color="#d2d2d2"/><stop offset="1" stop-color="#c8c8c8"/></linearGradient></defs>
      <rect x="112" y="120" width="1920" height="1014" fill="url(#wl)"/>
      <path d="M112 690L660 147H900L112 900z" fill="#cccccc" opacity=".5"/>
      <path d="M2032 960L1860 1134h172z" fill="#c3c3c3" opacity=".6"/>
      <rect x="112" y="1096" width="1920" height="40" fill="#c1c1c1"/><rect x="1706" y="1090" width="326" height="44" fill="#bfbfbf"/>
      <rect x="112" y="1084" width="1594" height="12" fill="#d4d4d4"/>
      <path d="M2032 1000L1890 1134h142z" fill="#b6b6b6" opacity=".6"/>
      <g fill="none" stroke="#d6d6d6">
        <path d="M179 945Q420 940 640 990" stroke-width="10"/>
        <path d="M1250 262C1330 120 1560 110 1718 224v40" stroke-width="12"/>
        <path d="M1493 262a24 30 0 0 1 48 0" stroke-width="11"/>
        <path d="M1114 145Q1075 185 1056 215M1358 145Q1290 190 1258 262M1566 145l17 18M1630 145Q1700 195 1735 262M1660 165q3 50 14 95" stroke-width="3.500" stroke="#cfcfcf"/>
        <path d="M1526 1096l-33 40M797 1094l12 14M950 1094l26 20" stroke-width="4" stroke="#cecece"/>
      </g></svg>`;
  }

  render() {
    const title = (s: string, w: number, fill: string) => tx(s, w, 14.5, { weight: 700, fill, family: UBUNTU });
    const bold = (s: string, w: number, size = 12) => tx(s, w, size, { weight: 700 });
    const dt = (s: string, w: number) => tx(s, w, 15, { fill: "#fff", family: UBUNTU, shadow: true });
    const fields: Array<[string, number, string, number, boolean]> = [
      ["Zoom Level", 51, "0", 5.5, true], ["Global Min Time", 78, "0.0000424292", 64, true], ["View  Init Time", 69, "0.0000424292", 64, false],
      ["Zoom Focus Time", 82, "0.0000837985", 68, false], ["View Final Time", 76, "0.0001251679", 65, false],
      ["Global Max Time", 80, "0.0001251679", 65, true], ["Time Per Pixel", 67, "0.0000001079", 68, false],
    ];
    const split = html`<div class="sp"><svg width="9" height="28" viewBox="0 0 9 28"><path d="M5 2v11L1 7.500zM1 15v10l4-5z" fill="#4a6fb5"/></svg><i></i></div>`;
    return html`<div class="mac">
      <div class="mtitle"><div class="light r"></div><div class="light y"></div><div class="light g"></div>${tx("cmda3634ubuntu [Running]", 343, 26, { fill: "#444", family: MAC })}</div>
      <div class="screen">${this.wallpaper()}
        <div class="panel">
          ${title("Activities", 68, "#dfdbd2")}
          <svg class="app" width="16" height="17" viewBox="0 0 48 50"><rect width="48" height="48" rx="5" fill="#f4f4f4"/>${javaArt}</svg>
          ${title("viewer-first-FirstFrame", 163, "#dfdbd2")}
          <svg class="c1" width="10" height="6"><path d="M0 0h10L5 6z" fill="#d0cec8"/></svg>
          <div class="clock">${title("Mon 11:17", 70, "#dfdbd2")}</div><div class="dot"></div>
          <div class="tray">
            <svg width="16" height="16" viewBox="0 0 16 16"><path d="M6 0h4v5H6zM1 11h5v5H1zM10 11h5v5h-5z" fill="#dfdbd2"/><path d="M8 5v3M3.500 11V8.500h9V11" fill="none" stroke="#dfdbd2"/></svg>
            <svg width="17" height="16" viewBox="0 0 17 16"><path d="M1 5h3l4-4v14l-4-4H1z" fill="#dfdbd2"/><path d="M10 4.500q2 3.500 0 7M12 3q3 5 0 10" fill="none" stroke="#dfdbd2" stroke-width="1.200"/><path d="M14.500 2q3.500 6 0 12" fill="none" stroke="#8d8b85"/></svg>
            <svg width="14" height="16" viewBox="0 0 14 16"><path d="M2 2.500h2.500V.8h5v1.700H12v12.700H2z" fill="none" stroke="#a9a7a0" stroke-width="1.500"/><path d="M8 4L4.500 9H7l-.8 4L10 8H7.500z" fill="#fff"/></svg>
            <svg width="10" height="6"><path d="M0 0h10L5 6z" fill="#d0cec8"/></svg>
          </div>
        </div>
        <div class="below">
          <div class="dock">
            <div class="di"><i></i><span>${firefox}</span></div><div class="di"><i></i><span>${files}</span></div><div class="di"><i></i><span>${software}</span></div>
            <div class="di on"><i></i><span>${terminal}</span></div><div class="di on"><i></i><span>${java}</span></div>
            <div class="di on act"><i></i><span>${java}</span></div><div class="di on"><i></i><span>${java}</span></div>
            <div class="grid9">${Array.from({ length: 9 }, () => html`<b></b>`)}</div>
          </div>
          <div class="icons">${trash}<div class="g00"></div>${dt("Trash", 36)}<div class="gap1"></div>${drive}<div class="gap0"></div>${dt("sf_", 20)}${dt("sharedFold", 75)}${dt("er", 13)}<div class="gap2"></div>${shared}<div class="gap3"></div>${dt("sharedFold", 75)}${dt("er", 13)}</div>
        </div>

        <div class="win jump">
          <div class="wt">${title("Jumpshot-4 (on calogin1)", 179, "#85837d")}${winBtns()}</div>
          <div class="menu">${bold("File", 23)}${bold("Edit", 24)}${bold("View", 28)}${bold("Help", 27)}</div>
          <div class="jbody">
            <div class="jr">${bold("LogName :", 65)}<div class="inp">${tx("mpiReduce.slog2", 95, 12)}</div></div>
            <div class="jr">${bold("ViewMap :", 59)}<div class="cmb">${bold("Process View", 78)}<div><svg width="10" height="6"><path d="M0 0h10L5 6z" fill="#222"/></svg></div></div></div>
          </div>
          <div class="jtools"><div class="grip"></div><div style="width:2px"></div>
            <div class="tb"><svg width="24" height="24" viewBox="0 0 24 24"><path d="M12 7h7v6h-8z" fill="#6b3030" stroke="#200"/></svg></div><div style="width:1px"></div>
            <div class="tb"><svg width="24" height="24" viewBox="0 0 24 24"><path d="M4 3h7l2 2h4v12H4z" fill="#fff" stroke="#000"/><path d="M6 5h5v5H6z" fill="#3a2"/><path d="M10 8h9v9h-9z" fill="#9c6" stroke="#000"/></svg></div><div style="width:11px"></div>
            <div class="tb dis"><svg width="24" height="24"><path d="M6 3h9l4 4v14H6z" fill="#c8c8c8" stroke="#aaa"/></svg></div><div style="width:1px"></div>
            <div class="tb dis"><svg width="24" height="24"><path d="M6 3h9l4 4v14H6z" fill="#c8c8c8" stroke="#aaa"/></svg></div><div style="width:11px"></div>
            <div class="tb"><svg width="24" height="24"><rect x="3" y="3" width="9" height="9" fill="#fff" stroke="#000"/><path d="M5 5l2 5 5-7" fill="none" stroke="#000" stroke-width="2"/><rect x="15" y="7" width="7" height="5" fill="#7277b5"/></svg></div><div style="width:11px"></div>
            <div class="tb"><svg width="24" height="28"><rect x="0" y="1" width="24" height="26" fill="#8fbf95" stroke="#000"/><circle cx="9" cy="8" r="3.500" fill="none" stroke="#243"/></svg></div>
          </div>
        </div>

        <div class="win time">
          <div class="wt">${title("TimeLine : mpiReduce.slog2  <Process View> (on calogin1)", 411, "#85837d")}${winBtns()}</div>
          <div class="bar"><div class="grip"></div>${tools.map(([g, m, d]) => html`<div class=${d ? "tb dis" : "tb"} style="margin-left:${m}px"><svg width="24" height="24" viewBox="0 0 24 24">${glyph[g]}</svg></div>`)}</div>
          <div class="cols">
            <div class="lc">
              <div class="dep"><div class="lbl">${tx("Lowest / Max. Depth", 89, 10.5)}</div><div class="fld">${tx("0 / 0", 21, 10.5)}</div></div>
              <div class="ccb">${tx("CumulativeE...", 68, 10.5)}<div><svg width="10" height="5"><path d="M0 0h10L5 5z" fill="#222"/></svg></div></div>
              <div class="row t1">${tree}<div class="vs">${sb("u")}<div class="trk"></div>${sb("d")}</div></div>
              <div class="row"><div class="hs" style="width:77px">${sb("l")}<div class="trk"></div>${sb("r")}</div><div class="cor"></div></div>
              <div class="wr"><div class="bd">${tx("@ world_rank", 75, 11.5)}</div><div class="vs">${sb("u")}<div class="trk"></div>${sb("d")}</div></div>
              <div class="row"><div class="hs" style="width:77px">${sb("l")}<div class="thumb" style="width:46px"><i></i></div><div class="trk"></div>${sb("r")}</div><div class="cor"></div></div>
            </div>
            ${split}
            <div class="cc">
              <div class="hd">${fields.map(([l, lw, v, vw, ro]) => html`<div class="f"><div class="lbl">${tx(l, lw, 10.5)}</div><div class=${ro ? "fld ro" : "fld"}>${tx(v, vw, 10.5)}</div></div>`)}
                <div class="zb"><div><svg width="18" height="20" viewBox="0 0 18 20"><circle cx="6.500" cy="7" r="5" fill="#fff" stroke="#000" stroke-width="1.200"/><path d="M10 11l6 7" stroke="#000" stroke-width="2.600"/></svg></div>
                <div><svg width="18" height="20" viewBox="0 0 18 20"><path d="M5 18l-4-7 1.500-1 2 2L3 5l1.500-1L7 9V2h2l.8 7L12 3l1.700.6L13 10l3-4 1 1-2.500 7-2 4z" fill="#8f8f8f" stroke="#777" stroke-width=".6"/></svg></div></div>
              </div>
              ${timeCanvas}
              <div class="hs ch">${sb("l")}<div class="trk"></div>${sb("r")}</div>
              ${ruler}
            </div>
            ${split}
            <div class="rc">
              <div class="cnt">${tx("COUNT", 35, 10.5)}</div>
              <div class="rcf"><div class="lbl">${tx("Row Count", 46.5, 10.5)}</div><div class="fld">${tx("7.0", 13.5, 10.5)}</div></div>
              ${slider}
              <div class="hs n">${sb("l")}<div class="trk"></div>${sb("r")}</div>
              <div class="fit"><div class="fl"><div class="a">${tx("Fit Mos", 30, 10.5)}</div><div class="b"><svg width="19" height="18" viewBox="0 0 19 18"><circle cx="6.500" cy="6.500" r="5.500" fill="#999"/><path d="M10 10l7 6" stroke="#999" stroke-width="3"/></svg><svg width="8" height="14"><path d="M5 1L1 7l4 6" fill="none" stroke="#222" stroke-dasharray="2 1"/></svg></div></div><div class="vs">${sb("u")}<div class="trk"></div>${sb("d")}</div></div>
              <div class="row"><div class="hs" style="width:34px">${sb("l")}<div class="trk"></div>${sb("r")}</div><div class="cor"></div></div>
            </div>
          </div>
        </div>

        <div class="win legend">
          <div class="wt">${title("Legend : mpiReduce.slog2...", 199, "#dfdbd2")}${winBtns(true)}</div>
          <div class="lp"><div class="lsc">
            <div class="lh"><div class="h1">${tx("Topo", 26, 11, { fill: "#f0f" })}</div><div class="h2">${tx("Name", 32, 11, { fill: "#ffafaf" })}${sortTri}</div><div class="h3">${tx("V", 8, 11, { fill: "#0f0" })}${sortTri}</div><div class="h4">${tx("S", 7, 11, { fill: "#ff0" })}${sortTri}</div></div>
            <div class="lm"><div class="lrs">${kinds.map(([n, w, k, c]) => html`<div class="lr">${topo(k, c)}<div class="nm">${tx(n, w, 11.5)}</div><div class="ck">${check}</div><div class="ck">${check}</div></div>`)}</div>
              <div class="vs">${sb("u")}<div class="trk"></div>${sb("d")}</div></div>
            <div class="hs" style="width:236px">${sb("l")}<div class="thumb" style="width:130px"><i></i></div><div class="trk"></div>${sb("r")}</div>
          </div></div>
          <div class="grp"><div class="lab">${bold("All", 17)}</div><div class="btn" style="width:71px">${bold("Select", 38, 11.5)}</div><div class="btn" style="width:84px">${bold("Deselect", 50, 11.5)}</div></div>
          <div class="cl"><div class="btn" style="width:66px">${bold("close", 32, 11.5)}</div></div>
        </div>
      </div>
      <div class="stat">${status.map((s) => html`<svg class="s" width="32" height="32" viewBox="0 0 32 32">${s}</svg>`)}${tx("Left ⌘", 77, 26, { fill: "#000", family: MAC, weight: 500 })}</div>
    </div>`;
  }
}
